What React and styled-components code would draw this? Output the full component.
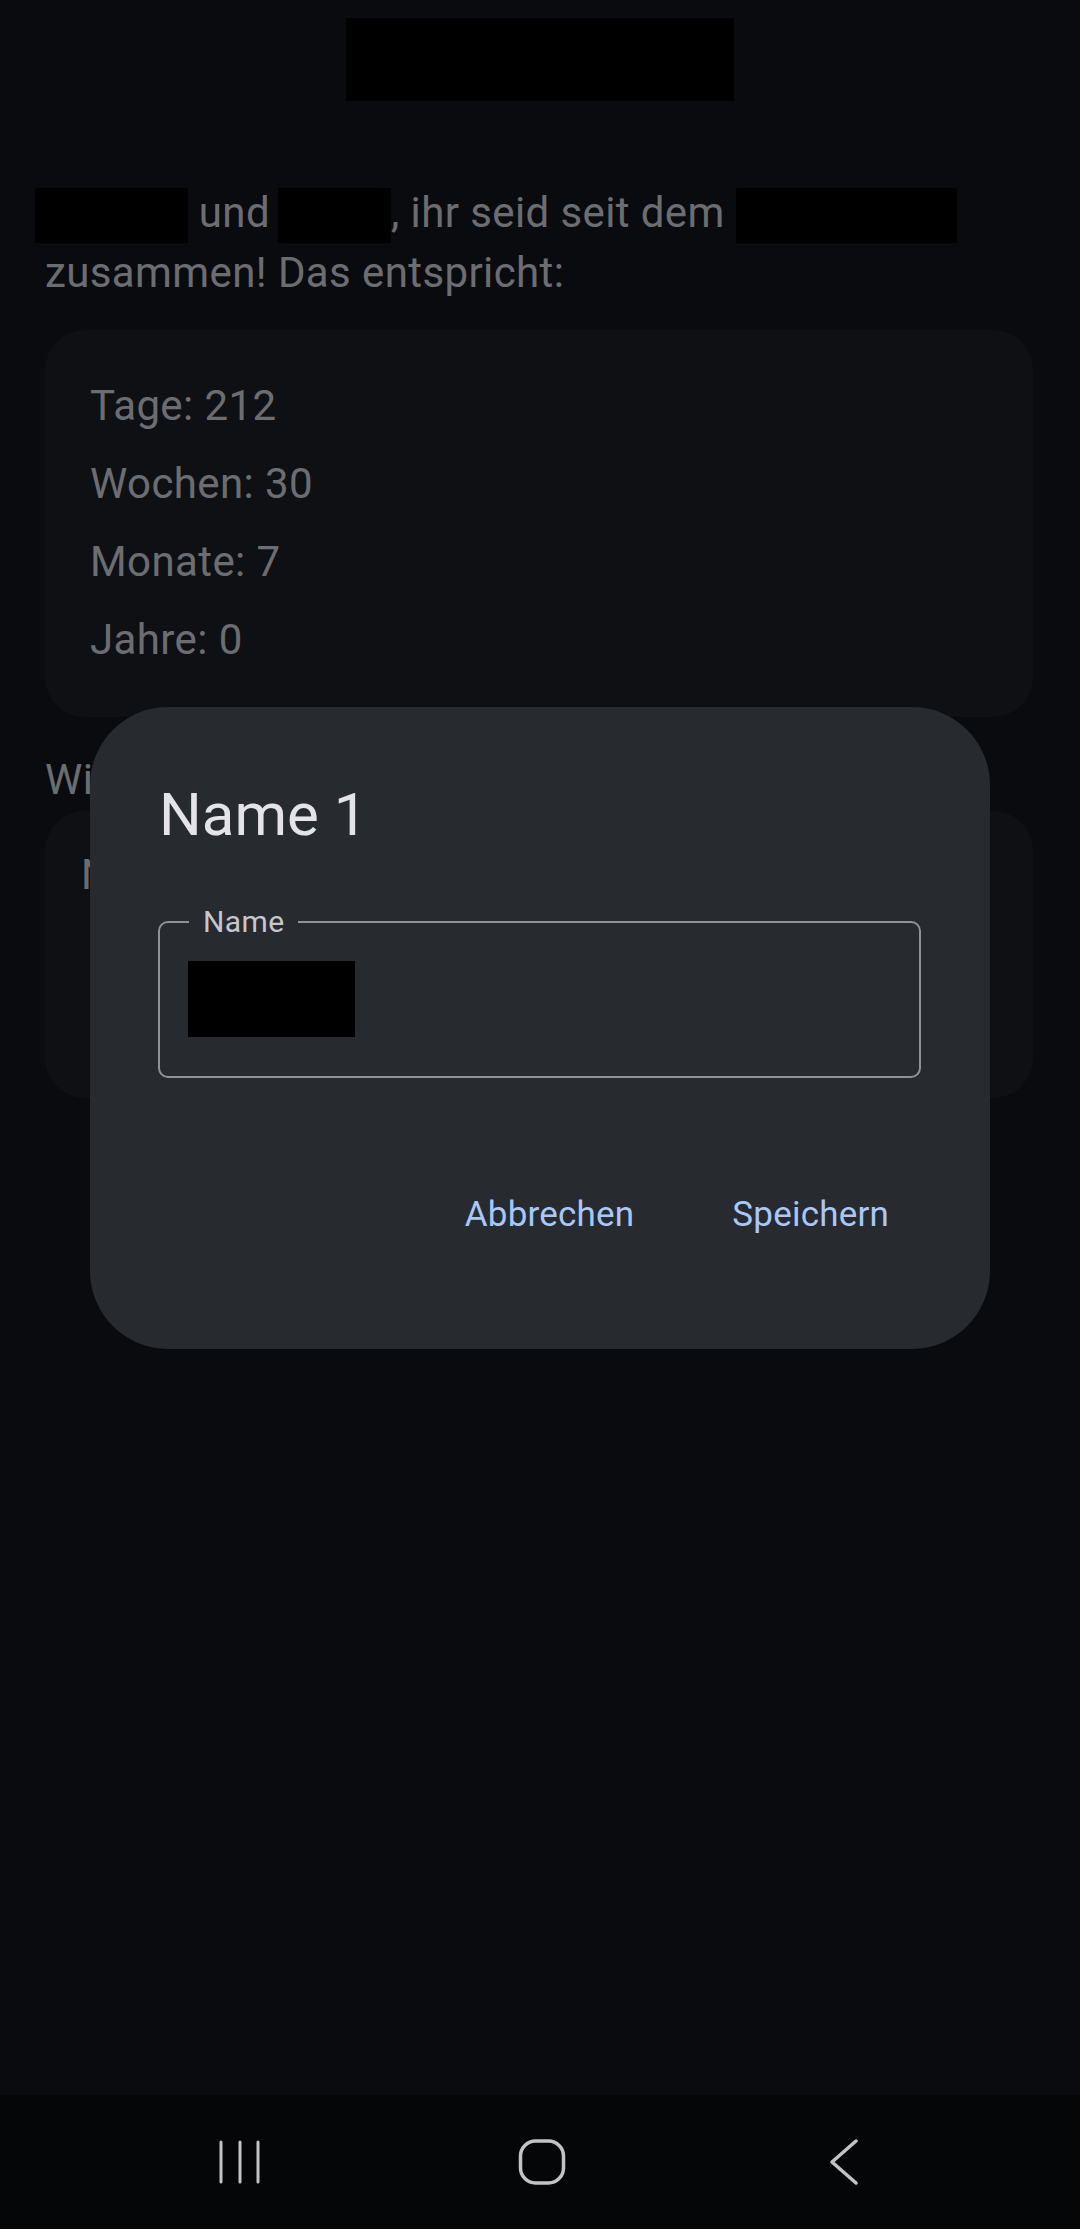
import styled, { createGlobalStyle } from "styled-components";

const GlobalStyle = createGlobalStyle`
    html, body {
        margin: 0;
        padding: 0;
        background-color: #050608;
    }
    * {
        box-sizing: border-box;
    }
`;

const App = () => {
    return (
        <Phone>
            <GlobalStyle />
            <Screen>
                <Content>
                    <TitleBlock />

                    <Intro>
                        <Redact $w={153} $ml={-10} /> und
                        <Redact $w={113} $ml={8} />, ihr seid seit dem{" "}
                        <Redact $w={221} /> zusammen! Das entspricht:
                    </Intro>

                    <StatsCard>
                        <li>Tage: 212</li>
                        <li>Wochen: 30</li>
                        <li>Monate: 7</li>
                        <li>Jahre: 0</li>
                    </StatsCard>

                    <SectionTitle>Wie heißt ihr?</SectionTitle>
                    <NamesCard>
                        <li>Name 1</li>
                    </NamesCard>
                </Content>

                <Scrim />

                <Dialog>
                    <DialogTitle>Name 1</DialogTitle>
                    <Field>
                        <legend>Name</legend>
                        <Redact $w={167} $h={76} $mt={22} />
                    </Field>
                    <Actions>
                        <TextButton>Abbrechen</TextButton>
                        <TextButton>Speichern</TextButton>
                    </Actions>
                </Dialog>
            </Screen>

            <NavBar>
                <NavItem>
                    <svg width="44" height="46" viewBox="0 0 44 46" fill="none" stroke="#c2c3c5" strokeWidth="3" strokeLinecap="round">
                        <line x1="3" y1="3" x2="3" y2="43" />
                        <line x1="22" y1="3" x2="22" y2="43" />
                        <line x1="40" y1="3" x2="40" y2="43" />
                    </svg>
                </NavItem>
                <NavItem>
                    <svg width="48" height="48" viewBox="0 0 48 48" fill="none" stroke="#c2c3c5" strokeWidth="3.5">
                        <rect x="2.5" y="3" width="43" height="42" rx="15" />
                    </svg>
                </NavItem>
                <NavItem>
                    <svg width="30" height="46" viewBox="0 0 30 46" fill="none" stroke="#c2c3c5" strokeWidth="3.5" strokeLinecap="round" strokeLinejoin="round">
                        <polyline points="27,2 3,23 27,44" />
                    </svg>
                </NavItem>
            </NavBar>
        </Phone>
    );
};

const Phone = styled.div`
    width: 1080px;
    height: 2229px;
    display: flex;
    flex-direction: column;
    font-family: Roboto, "Noto Sans", sans-serif;
    overflow: hidden;
`;

const Screen = styled.div`
    position: relative;
    height: 2095px;
    background-color: #14161c;
`;

const Content = styled.div`
    display: flex;
    flex-direction: column;
    padding: 18px 47px 0 45px;
    color: #d8dbe2;
    font-size: 42px;
    letter-spacing: 0.4px;
`;

const TitleBlock = styled.div`
    align-self: center;
    width: 388px;
    height: 83px;
    margin-left: 2px;
    background-color: #000;
`;

const Redact = styled.span`
    display: inline-block;
    vertical-align: middle;
    width: ${(p) => p.$w}px;
    height: ${(p) => p.$h || 55}px;
    margin-left: ${(p) => p.$ml || 0}px;
    margin-top: ${(p) => p.$mt || 0}px;
    background-color: #000;
`;

const Intro = styled.p`
    margin: 82px 0 0;
    line-height: 60px;
`;

const StatsCard = styled.ul`
    list-style: none;
    margin: 27px 0 0;
    padding: 37px 45px 38px;
    border-radius: 40px;
    background-color: #1c2028;

    li {
        line-height: 78px;
    }
`;

const SectionTitle = styled.h2`
    margin: 33px 0 0;
    font-size: 42px;
    font-weight: 400;
    line-height: 60px;
`;

const NamesCard = styled.ul`
    list-style: none;
    margin: 1px 0 0;
    padding: 34px 36px;
    height: 287px;
    border-radius: 40px;
    background-color: #1c2028;

    li {
        line-height: 60px;
    }
`;

const Scrim = styled.div`
    position: absolute;
    inset: 0;
    background-color: rgba(0, 0, 0, 0.5);
`;

const Dialog = styled.div`
    position: absolute;
    left: 90px;
    top: 707px;
    width: 900px;
    height: 642px;
    display: flex;
    flex-direction: column;
    padding: 70px 69px 0 68px;
    border-radius: 78px;
    background-color: #272a2f;
`;

const DialogTitle = styled.h1`
    margin: 0 0 0 1px;
    font-size: 60px;
    font-weight: 400;
    line-height: 76px;
    color: #e3e3e8;
`;

const Field = styled.fieldset`
    margin: 52px 0 0;
    padding: 0 0 0 28px;
    height: 173px;
    border: 2px solid #909298;
    border-radius: 10px;

    legend {
        margin-left: 1px;
        padding: 0 13px 0 14px;
        font-size: 30px;
        line-height: 34px;
        letter-spacing: 0.4px;
        color: #c6c7cc;
    }
`;

const Actions = styled.div`
    display: flex;
    justify-content: flex-end;
    gap: 34px;
    margin-top: 84px;
`;

const TextButton = styled.button`
    height: 105px;
    padding: 0 32px;
    border: none;
    border-radius: 52px;
    background: transparent;
    font-family: Roboto, sans-serif;
    font-size: 35px;
    font-weight: 400;
    letter-spacing: 0.2px;
    color: #a8c7fa;
`;

const NavBar = styled.nav`
    flex: 1;
    display: grid;
    grid-template-columns: repeat(3, 302px);
    justify-content: center;
    align-items: center;
    padding-left: 4px;
    background-color: #050608;
`;

const NavItem = styled.div`
    display: flex;
    justify-content: center;
    align-items: center;
    height: 100%;
`;

export default App;
